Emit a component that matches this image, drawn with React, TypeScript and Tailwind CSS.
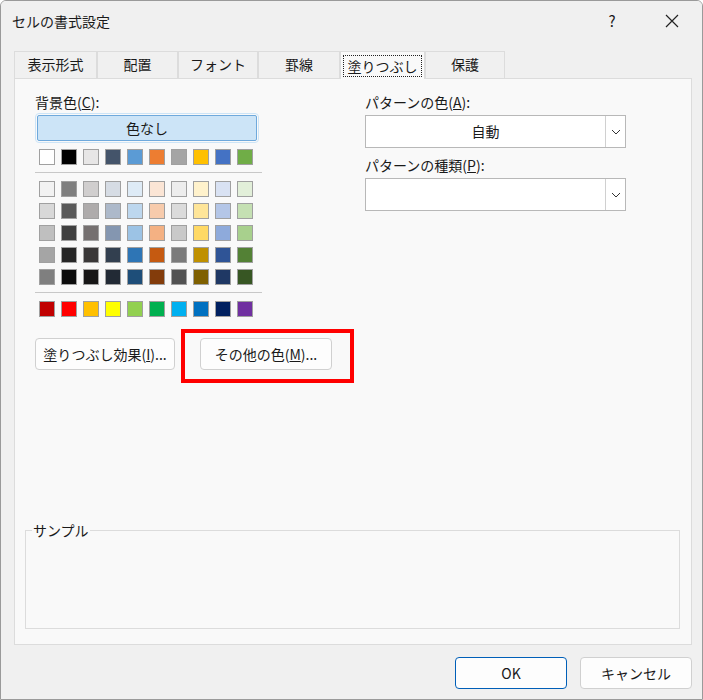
const F = { fontFamily: '"Noto Sans CJK JP", "Noto Sans", sans-serif' };
const row1 = ['#ffffff','#000000','#e7e6e6','#44546a','#5b9bd5','#ed7d31','#a5a5a5','#ffc000','#4472c4','#70ad47'];
const grid = [
  ['#f2f2f2','#7f7f7f','#d0cece','#d6dce4','#deebf6','#fbe5d5','#ededed','#fff2cc','#d9e2f3','#e2efd9'],
  ['#d8d8d8','#595959','#aeabab','#adb9ca','#bdd7ee','#f7cbac','#dbdbdb','#fee599','#b4c6e7','#c5e0b3'],
  ['#bfbfbf','#3f3f3f','#757070','#8496b0','#9cc3e5','#f4b183','#c9c9c9','#ffd965','#8eaadb','#a8d08d'],
  ['#a5a5a5','#262626','#3a3838','#323f4f','#2e75b5','#c55a11','#7b7b7b','#bf9000','#2f5496','#538135'],
  ['#7f7f7f','#0c0c0c','#171616','#222a35','#1e4e79','#833c0b','#525252','#7f6000','#1f3864','#375623'],
];
const row3 = ['#c00000','#ff0000','#ffc000','#ffff00','#92d050','#00b050','#00b0f0','#0070c0','#002060','#7030a0'];

function Row({ c }: { c: string[] }) {
  return (
    <div className="flex gap-[6px]">
      {c.map((x, i) => (
        <div key={i} className="w-[16px] h-[16px] border border-[#a0a0a0]" style={{ background: x }} />
      ))}
    </div>
  );
}

function Select({ text }: { text: string }) {
  return (
    <div className="w-[261px] h-[33px] bg-white border border-[#b8b8b8] flex items-center">
      <div className="flex-1 text-center text-[14px]">{text}</div>
      <div className="w-[20px] h-full border-l border-[#d0d0d0] flex items-center justify-center">
        <svg width="10" height="6" viewBox="0 0 10 6"><path d="M1 1l4 4 4-4" stroke="#333" fill="none" strokeWidth="1" /></svg>
      </div>
    </div>
  );
}

export default function App() {
  const tabs = ['表示形式', '配置', 'フォント', '罫線', '塗りつぶし', '保護'];
  const widths = [83, 81, 80, 82, 85, 80];
  return (
    <div style={F} className="w-[703px] h-[700px] bg-[#f0f0f0] text-[#1a1a1a] border border-[#9a9a9a] rounded-t-[6px] flex flex-col overflow-hidden">
      <div className="h-[40px] flex items-center pl-[11px] text-[14px] bg-[#f0f0f0]">
        <span className="flex-1">セルの書式設定</span>
        <span className="w-[60px] text-center text-[15px]">?</span>
        <span className="w-[60px] flex justify-center">
          <svg width="14" height="14" viewBox="0 0 14 14"><path d="M1 1l12 12M13 1L1 13" stroke="#222" strokeWidth="1.2" /></svg>
        </span>
      </div>
      <div className="pl-[13px] mt-[10px] flex items-end h-[27px]">
        {tabs.map((t, i) => (
          <div key={t} style={{ width: widths[i] }} className={`flex items-center justify-center text-[14px] border border-b-0 border-[#dcdcdc] ${i === 4 ? 'bg-[#f9f9f9] h-[28px] -mb-px relative z-10' : 'bg-[#f0f0f0] h-[27px]'}`}>
            <span className={i === 4 ? 'outline outline-1 outline-dotted outline-[#222] px-[3px] leading-[20px]' : 'pb-[2px]'}>{t}</span>
          </div>
        ))}
      </div>
      <div className="ml-[13px] w-[678px] h-[567px] bg-[#f9f9f9] border border-[#dcdcdc] relative">
        <div className="flex">
          <div className="pl-[20px] pt-[14px] w-[350px]">
            <div className="text-[14px] leading-[18px]">背景色(<u>C</u>):</div>
            <div className="mt-[4px] ml-[2px] w-[220px] h-[26px] bg-[#cce4f7] border border-[#6fa9dc] text-center text-[14px] leading-[24px] rounded-[2px] outline outline-1 outline-[#cce4f7] outline-offset-1">色なし</div>
            <div className="ml-[4px] mt-[8px]"><Row c={row1} /></div>
            <div className="w-[227px] h-px bg-[#c8c8c8] mt-[7px]" />
            <div className="ml-[4px] mt-[8px] flex flex-col gap-[6px]">
              {grid.map((r, i) => <Row key={i} c={r} />)}
            </div>
            <div className="w-[227px] h-px bg-[#c8c8c8] mt-[7px]" />
            <div className="ml-[4px] mt-[8px]"><Row c={row3} /></div>
            <div className="flex mt-[21px] gap-[25px]">
              <div className="w-[140px] h-[32px] bg-[#fdfdfd] border border-[#d0d0d0] rounded-[4px] flex items-center justify-center text-[14px]">塗りつぶし効果(<u>I</u>)...</div>
              <div className="w-[132px] h-[32px] bg-[#fdfdfd] border border-[#d0d0d0] rounded-[4px] flex items-center justify-center text-[14px]">その他の色(<u>M</u>)...</div>
            </div>
          </div>
          <div className="pt-[14px]">
            <div className="text-[14px] leading-[18px]">パターンの色(<u>A</u>):</div>
            <div className="mt-[4px]"><Select text="自動" /></div>
            <div className="text-[14px] leading-[18px] mt-[8px]">パターンの種類(<u>P</u>):</div>
            <div className="mt-[4px]"><Select text="" /></div>
          </div>
        </div>
        <div className="absolute left-[166px] top-[250px] w-[173px] h-[54px] border-[4px] border-[#ff0000]" />
        <div className="mt-[160px] ml-[10px] w-[655px] h-[99px] border border-[#dcdcdc] relative">
          <span className="absolute left-[6px] -top-[10px] bg-[#f9f9f9] text-[14px] leading-[18px] px-[1px]">サンプル</span>
        </div>
      </div>
      <div className="flex justify-end gap-[13px] pr-[10px] mt-[12px]">
        <div className="w-[112px] h-[32px] bg-[#fdfdfd] border border-[#005fb8] rounded-[4px] flex items-center justify-center text-[14px]">OK</div>
        <div className="w-[112px] h-[32px] bg-[#fdfdfd] border border-[#d0d0d0] rounded-[4px] flex items-center justify-center text-[14px]">キャンセル</div>
      </div>
    </div>
  );
}
